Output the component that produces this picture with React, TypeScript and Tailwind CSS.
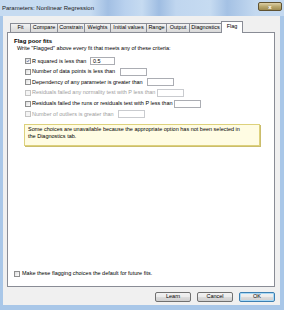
import React from "react";

const tabs = [
  { label: "Fit", w: "w-[20px]" },
  { label: "Compare", w: "w-[27px]" },
  { label: "Constrain", w: "w-[27px]" },
  { label: "Weights", w: "w-[26px]" },
  { label: "Initial values", w: "w-[36px]" },
  { label: "Range", w: "w-[20px]" },
  { label: "Output", w: "w-[23px]" },
  { label: "Diagnostics", w: "w-[32px]" },
];

interface CheckProps {
  checked?: boolean;
  disabled?: boolean;
}

function Check({ checked, disabled }: CheckProps) {
  return (
    <span
      className={
        "relative flex h-[6px] w-[6px] shrink-0 items-center justify-center border " +
        (disabled
          ? "border-[#c4c4c4] bg-[#f4f4f4]"
          : "border-[#8e8f8f] bg-[linear-gradient(135deg,#dcdcdc,#ffffff)]")
      }
    >
      {checked && (
        <svg viewBox="0 0 6 6" className="h-[6px] w-[6px]">
          <path d="M1 3 L2.5 4.5 L5 1.2" fill="none" stroke="#4a5f97" strokeWidth="1.1" />
        </svg>
      )}
    </span>
  );
}

interface RowProps {
  label: string;
  labelW: string;
  inputW?: string;
  checked?: boolean;
  disabled?: boolean;
  value?: string;
}

function CriterionRow({ label, labelW, inputW = "w-[27px]", checked, disabled, value }: RowProps) {
  return (
    <div className="flex h-[10.6px] items-center pl-[17px]">
      <Check checked={checked} disabled={disabled} />
      <span className={"ml-[1px] whitespace-nowrap " + labelW + (disabled ? " text-[#9d9d9d]" : " text-black")}>
        {label}
      </span>
      <span
        className={
          "flex h-[8px] items-center border bg-white pl-[2px] text-black " +
          inputW +
          (disabled ? " border-[#c9cbcf]" : " border-[#abadb3]")
        }
      >
        {value}
      </span>
    </div>
  );
}

function Button({ label, primary }: { label: string; primary?: boolean }) {
  return (
    <div
      className={
        "flex h-[10px] w-[36px] items-center justify-center rounded-[2px] border bg-[linear-gradient(#f2f2f2,#ebebeb_45%,#dddddd_50%,#cfcfcf)] text-black " +
        (primary ? "border-[#3c7fb1] shadow-[inset_0_0_0_1px_#a9d9f5]" : "border-[#707070]")
      }
    >
      {label}
    </div>
  );
}

export default function App() {
  return (
    <div
      className="flex h-[310px] w-[284px] flex-col overflow-hidden bg-[#a9c7e8] text-[5.5px] leading-none"
      style={{ fontFamily: '"Liberation Sans", Arial, sans-serif' }}
    >
      {/* Title bar */}
      <div className="flex h-[16px] shrink-0 items-start bg-[linear-gradient(90deg,#c6dbf1_0%,#c6dbf1_32%,#a2bfe3_38%,#b9d1ee_44%,#c6dbf1_50%,#9fbde2_56%,#c0d6ef_62%,#c6dbf1_74%,#a4c1e4_80%,#c4d9f0_90%)]">
        <span className="mt-[5px] pl-[2px] text-[6px] text-[#1a1a1a]">Parameters: Nonlinear Regression</span>
        <div className="ml-auto mr-[2px] mt-[2px] flex h-[9px] w-[24px] items-center justify-center rounded-[2px] border border-[#5f5232] bg-[linear-gradient(#dccfa6,#b9a86f_50%,#9e8b52)] text-[6px] font-bold text-white">
          x
        </div>
      </div>

      {/* Dialog body */}
      <div className="ml-[3px] mr-[4px] flex flex-1 flex-col bg-[#f0f0f0]">
        {/* Tabs */}
        <div className="flex h-[16px] shrink-0 items-end pl-[7px]">
          {tabs.map((t) => (
            <div
              key={t.label}
              className={
                "flex h-[9px] items-center justify-center border-l border-t border-[#898c95] bg-[linear-gradient(#f3f3f3,#e5e5e5_50%,#d9d9d9)] whitespace-nowrap text-black " +
                t.w
              }
            >
              {t.label}
            </div>
          ))}
          <div className="relative z-10 -mb-px flex h-[12px] w-[22px] items-start justify-center border-x border-t border-[#898c95] bg-white pt-[2px] text-black">
            Flag
          </div>
        </div>

        {/* Tab panel */}
        <div className="ml-[4px] mr-[5px] flex h-[255px] shrink-0 flex-col border border-[#898c95] bg-white">
          <div className="mt-[4px] flex h-[8px] items-center pl-[6px] text-[6px] font-bold text-black">
            Flag poor fits
          </div>
          <div className="flex h-[7px] items-center pl-[9px] text-black">
            Write "Flagged" above every fit that meets any of these criteria:
          </div>
          <div className="mt-[4px] flex flex-col">
            <CriterionRow label="R squared is less than" labelW="w-[58px]" inputW="w-[25px]" checked value="0.5" />
            <CriterionRow label="Number of data points is less than" labelW="w-[88px]" />
            <CriterionRow label="Dependency of any parameter is greater than" labelW="w-[115px]" />
            <CriterionRow label="Residuals failed any normality test with P less than" labelW="w-[125px]" disabled />
            <CriterionRow label="Residuals failed the runs or residuals test with P less than" labelW="w-[142px]" />
            <CriterionRow label="Number of outliers is greater than" labelW="w-[86px]" disabled />
          </div>
          <div className="ml-[16px] mt-[4px] h-[22px] w-[236px] border border-[#ddd17c] bg-[#fffce3] pl-[3px] pt-[2.5px] text-black shadow-[1px_1px_0_#cbbd6c]">
            <div className="h-[7px]">
              Some choices are unavailable because the appropriate option has not been selected in
            </div>
            <div className="h-[7px]">the Diagnostics tab.</div>
          </div>
          <div className="mb-[8px] mt-auto flex h-[8px] items-center pl-[6px] text-black">
            <Check />
            <span className="ml-[2px]">Make these flagging choices the default for future fits.</span>
          </div>
        </div>

        {/* Buttons */}
        <div className="flex justify-end gap-[6px] pr-[5px] pt-[5px]">
          <Button label="Learn" />
          <Button label="Cancel" />
          <Button label="OK" primary />
        </div>
      </div>
      <div className="h-[5px] shrink-0" />
    </div>
  );
}
